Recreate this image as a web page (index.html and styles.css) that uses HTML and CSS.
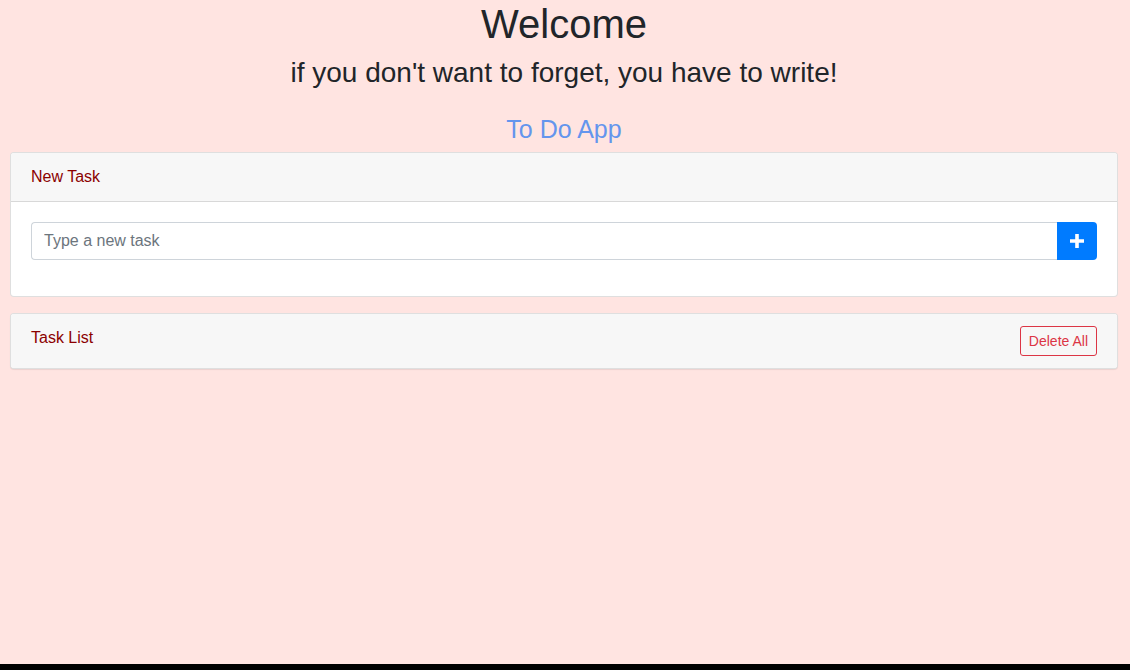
FILE: index.html
```html
<!DOCTYPE html>
<html lang="en">
<head>
<meta charset="utf-8">
<title>To Do App</title>
<link rel="stylesheet" href="styles.css">
</head>
<body>
<div class="page">
  <h1 class="title">Welcome</h1>
  <h3 class="subtitle">if you don't want to forget, you have to write!</h3>
  <h4 class="app-name">To Do App</h4>

  <div class="card">
    <div class="card-header">New Task</div>
    <div class="card-body">
      <form class="input-group">
        <input class="task-input" type="text" placeholder="Type a new task">
        <button class="add-btn" type="button" aria-label="Add">
          <svg width="14" height="14" viewBox="0 0 14 14"><path d="M7 0.5v13M0.5 7h13" stroke="#fff" stroke-width="3.6" stroke-linecap="round"/></svg>
        </button>
      </form>
    </div>
  </div>

  <div class="card card-list">
    <div class="card-header list-header">
      <span>Task List</span>
      <button class="delete-btn" type="button">Delete All</button>
    </div>
  </div>
</div>
</body>
</html>
```

FILE: styles.css
```css
html {
  background: #000;
  margin: 0;
  height: 100%;
}
body {
  margin: 0;
  height: 664px;
  background: #ffe4e1;
  font-family: "Liberation Sans", Arial, sans-serif;
  color: #212529;
  font-size: 16px;
  line-height: 1.5;
}
.page {
  padding: 0 12px 0 10px;
  text-align: center;
}
.title {
  font-size: 40px;
  font-weight: 400;
  line-height: 1.2;
  margin: 0 0 8px;
}
.subtitle {
  font-size: 28px;
  font-weight: 400;
  line-height: 1.2;
  margin: 0 0 8px;
}
.app-name {
  font-size: 25px;
  font-weight: 400;
  line-height: 1.2;
  margin: 0 0 8px;
  padding-top: 16px;
  color: #6495ed;
}
.card {
  text-align: left;
  background: #fff;
  border: 1px solid rgba(0,0,0,.125);
  border-radius: 4px;
  margin-bottom: 16px;
}
.card-header {
  background: #f7f7f7;
  padding: 12px 20px;
  color: #8b0000;
  border-bottom: 1px solid rgba(0,0,0,.125);
  border-radius: 3px 3px 0 0;
}
.card-body {
  padding: 20px;
}
.input-group {
  display: flex;
  margin: 0 0 16px;
}
.task-input {
  flex: 1;
  height: 38px;
  box-sizing: border-box;
  border: 1px solid #ced4da;
  border-right: none;
  border-radius: 4px 0 0 4px;
  padding: 6px 12px;
  font-family: inherit;
  font-size: 16px;
  color: #495057;
  background: #fff;
  outline: none;
}
.task-input::placeholder {
  color: #6c757d;
}
.add-btn {
  width: 40px;
  height: 38px;
  border: none;
  background: #007bff;
  border-radius: 0 4px 4px 0;
  display: flex;
  align-items: center;
  justify-content: center;
  padding: 0;
}
.card-list {
  box-shadow: 0 1px 1px rgba(0,0,0,.08);
}
.list-header {
  display: flex;
  justify-content: space-between;
  align-items: flex-start;
  border-bottom: none;
  border-radius: 3px;
}
.delete-btn {
  font-family: inherit;
  font-size: 14px;
  line-height: 20px;
  padding: 4px 8px;
  border: 1px solid #dc3545;
  color: #dc3545;
  background: transparent;
  border-radius: 3px;
}
```
